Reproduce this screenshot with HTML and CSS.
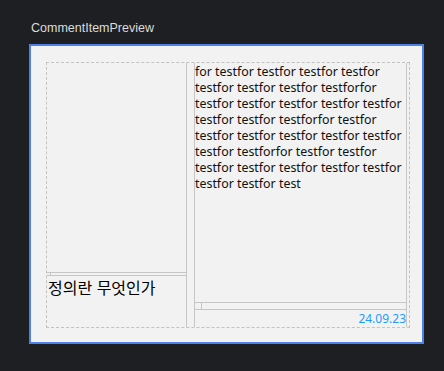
FILE: index.html
```html
<!DOCTYPE html>
<html lang="ko">
<head>
  <meta charset="UTF-8" />
  <title>CommentItemPreview</title>
  <link rel="stylesheet" href="styles.css">
</head>
<body>

  <div class="caption">CommentItemPreview</div>

  <div class="frame">
    <div class="item">

      <div class="col left">
        <div class="thumb"></div>
        <div class="split"><span class="grip"></span></div>
        <div class="title">정의란 무엇인가</div>
      </div>

      <div class="col gutter"></div>

      <div class="col right">
        <div class="body">for testfor testfor testfor testfor testfor testfor testfor testforfor testfor testfor testfor testfor testfor testfor testfor testforfor testfor testfor testfor testfor testfor testfor testfor testforfor testfor testfor testfor testfor testfor testfor testfor testfor testfor test</div>
        <div class="split wide"><span class="grip"></span></div>
        <div class="date">24.09.23</div>
      </div>

    </div>
  </div>

</body>
</html>
```

FILE: styles.css
```css
* {
  box-sizing: border-box;
}

body {
  margin: 0;
  padding: 19px 0 0 29px;
  background-color: #1e1f22;
  font-family: "Noto Sans", "Noto Sans CJK KR", sans-serif;
}

.caption {
  color: #dcdcdc;
  font-family: "Liberation Sans", Arial, sans-serif;
  font-size: 12.5px;
  line-height: 18px;
  padding-left: 2px;
  margin-bottom: 7px;
}

.frame {
  width: 395px;
  height: 300px;
  border: 2px solid #4f80ea;
  background-color: #f2f2f2;
  padding: 16px 12px 13px 15px;
}

.item {
  display: flex;
  height: 266px;
  border: 1px dashed #c2c2c2;
  padding-right: 2px;
}

.col {
  display: flex;
  flex-direction: column;
  border-right: 1px solid #c6c6c6;
}

.left {
  width: 140px;
}

.gutter {
  width: 8px;
}

.right {
  width: 212px;
}

.thumb {
  flex: 1;
}

.split {
  height: 4px;
  border-top: 1px solid #c6c6c6;
  border-bottom: 1px solid #c6c6c6;
}

.split.wide {
  height: 8px;
}

.grip {
  display: block;
  width: 4px;
  height: 100%;
  border-right: 1px solid #c6c6c6;
}

.split.wide .grip {
  width: 7px;
}

.title {
  height: 51px;
  padding: 0 0 0 1px;
  font-family: "Noto Sans CJK KR", sans-serif;
  font-size: 16px;
  line-height: 22px;
  color: #000;
}

.body {
  flex: 1;
  padding-top: 1px;
  font-size: 12.4px;
  line-height: 16px;
  color: #111;
}

.date {
  height: 17px;
  text-align: right;
  font-size: 12px;
  line-height: 17px;
  color: #1e9bff;
}
```
